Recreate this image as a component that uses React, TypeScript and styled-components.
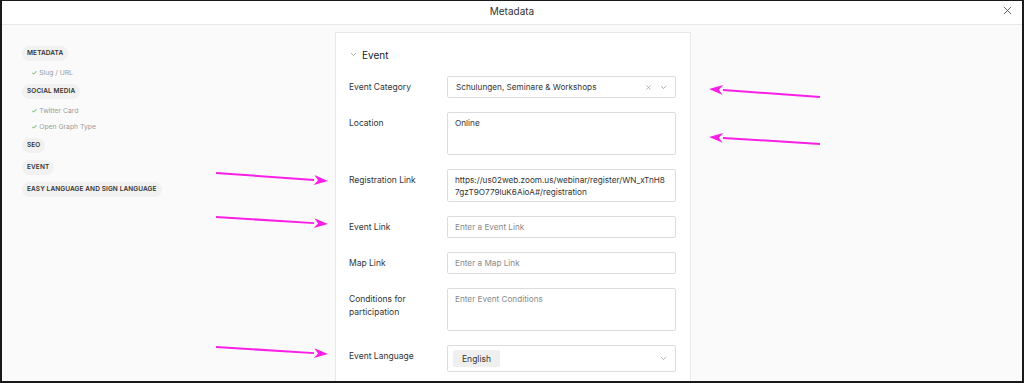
import React from 'react';
import styled, { createGlobalStyle } from 'styled-components';

const GlobalStyle = createGlobalStyle`
  html, body {
    margin: 0;
    padding: 0;
    background: #ffffff;
  }
  body {
    font-family: Inter, "Noto Sans", "Liberation Sans", sans-serif;
    color: #333333;
  }
  * {
    box-sizing: border-box;
  }
`;

type NavItem = { title: string; children?: string[] };

const nav: NavItem[] = [
  { title: 'Metadata', children: ['Slug / URL'] },
  { title: 'Social Media', children: ['Twitter Card', 'Open Graph Type'] },
  { title: 'SEO' },
  { title: 'Event' },
  { title: 'Easy Language and Sign Language' },
];

// annotation arrows: tail -> head
const arrows = [
  { x1: 820, y1: 97, x2: 709, y2: 89 },
  { x1: 820, y1: 144, x2: 709, y2: 137 },
  { x1: 216, y1: 173, x2: 328, y2: 181 },
  { x1: 216, y1: 217, x2: 328, y2: 224 },
  { x1: 216, y1: 347, x2: 328, y2: 354 },
];

const Chevron: React.FC<{ size?: number }> = ({ size = 7 }) => (
  <svg width={size} height={size} viewBox="0 0 10 10" fill="none">
    <path d="M2 3.5 L5 6.5 L8 3.5" stroke="#888" strokeWidth="1" strokeLinecap="round" strokeLinejoin="round" />
  </svg>
);

const App: React.FC = () => (
  <>
    <GlobalStyle />
    <Frame>
      <Header>
        <Title>Metadata</Title>
        <Close aria-label="close">
          <svg width="9" height="9" viewBox="0 0 10 10">
            <path d="M1 1 L9 9 M9 1 L1 9" stroke="#555" strokeWidth="1" />
          </svg>
        </Close>
      </Header>
      <Body>
        <Sidebar>
          {nav.map((item) => (
            <React.Fragment key={item.title}>
              <PillRow>
                <Pill>{item.title}</Pill>
              </PillRow>
              {item.children?.map((child) => (
                <SubItem key={child}>
                  <Check>✓</Check>
                  {child}
                </SubItem>
              ))}
            </React.Fragment>
          ))}
        </Sidebar>
        <Card>
          <SectionHead>
            <Chevron />
            <span>Event</span>
          </SectionHead>
          <Form>
            <Label>Event Category</Label>
            <Select $height={22}>
              <SelectValue>Schulungen, Seminare &amp; Workshops</SelectValue>
              <ClearX>
                <svg width="7" height="7" viewBox="0 0 10 10">
                  <path d="M2 2 L8 8 M8 2 L2 8" stroke="#999" strokeWidth="1" />
                </svg>
              </ClearX>
              <Chevron />
            </Select>

            <Label>Location</Label>
            <Field $height={43}>Online</Field>

            <Label>Registration Link</Label>
            <Field $height={33} $breakAll>
              https://us02web.zoom.us/webinar/register/WN_xTnH87gzT9O779luK6AioA#/registration
            </Field>

            <Label>Event Link</Label>
            <Field $height={22} $placeholder>Enter a Event Link</Field>

            <Label>Map Link</Label>
            <Field $height={22} $placeholder>Enter a Map Link</Field>

            <Label>Conditions for participation</Label>
            <Field $height={43} $placeholder>Enter Event Conditions</Field>

            <Label>Event Language</Label>
            <Select $height={27}>
              <SelectValue>
                <Chip>English</Chip>
              </SelectValue>
              <Chevron />
            </Select>
          </Form>
        </Card>
      </Body>
      <Overlay width="1024" height="383" viewBox="0 0 1024 383">
        {arrows.map((a) => {
          const dx = a.x2 - a.x1;
          const dy = a.y2 - a.y1;
          const len = Math.hypot(dx, dy);
          const ux = dx / len;
          const uy = dy / len;
          const bx = a.x2 - ux * 14;
          const by = a.y2 - uy * 14;
          const px = -uy * 5;
          const py = ux * 5;
          return (
            <g key={`${a.x1}-${a.y1}`}>
              <line x1={a.x1} y1={a.y1} x2={bx} y2={by} stroke="#f91fe6" strokeWidth="2" />
              <polygon
                points={`${a.x2},${a.y2} ${bx + px},${by + py} ${bx + ux * 4},${by + uy * 4} ${bx - px},${by - py}`}
                fill="#f91fe6"
              />
            </g>
          );
        })}
      </Overlay>
    </Frame>
  </>
);

const Frame = styled.div`
  position: relative;
  width: 1024px;
  height: 383px;
  display: flex;
  flex-direction: column;
  border-style: solid;
  border-color: #1a1a1a;
  border-width: 1px 2px 2px 2px;
  overflow: hidden;
  background: #fafafa;
`;

const Header = styled.div`
  position: relative;
  flex: 0 0 24px;
  display: flex;
  align-items: center;
  justify-content: center;
  background: #ffffff;
  border-bottom: 1px solid #e8e8e8;
`;

const Title = styled.div`
  font-size: 10px;
  color: #333;
  margin-top: -4px;
`;

const Close = styled.div`
  position: absolute;
  right: 10px;
  top: 5px;
  display: flex;
`;

const Body = styled.div`
  flex: 1;
  display: flex;
  min-height: 0;
`;

const Sidebar = styled.div`
  width: 333px;
  flex: 0 0 333px;
  padding: 17px 0 0 20px;
  display: flex;
  flex-direction: column;
`;

const PillRow = styled.div`
  height: 22px;
  display: flex;
  align-items: center;
`;

const Pill = styled.span`
  display: inline-flex;
  align-items: center;
  height: 15px;
  padding: 0 5px;
  border-radius: 8px;
  background: #f1f1f1;
  font-size: 6.5px;
  font-weight: 600;
  letter-spacing: 0.1px;
  text-transform: uppercase;
  color: #333;
`;

const SubItem = styled.div`
  height: 16px;
  display: flex;
  align-items: center;
  padding-left: 9px;
  font-size: 6.8px;
  color: #9a9a9a;
`;

const Check = styled.span`
  color: #3fa34d;
  font-size: 7px;
  margin-right: 2px;
`;

const Card = styled.div`
  margin-top: 7px;
  width: 356px;
  flex: 0 0 356px;
  background: #ffffff;
  border: 1px solid #e8e8e8;
  border-bottom: none;
  padding: 0 13px;
`;

const SectionHead = styled.div`
  height: 43px;
  display: flex;
  align-items: center;
  gap: 5px;
  padding-left: 1px;
  font-size: 10px;
  color: #222;
`;

const Form = styled.div`
  display: grid;
  grid-template-columns: 98px 229px;
  row-gap: 14px;
`;

const Label = styled.div`
  font-size: 8.5px;
  line-height: 13px;
  padding-top: 5px;
  padding-right: 14px;
  color: #333;
`;

const Field = styled.div<{ $height: number; $placeholder?: boolean; $breakAll?: boolean }>`
  height: ${(p) => p.$height}px;
  border: 1px solid #dcdcdc;
  border-radius: 2px;
  padding: 4px 7px 0 7px;
  font-size: 8.2px;
  line-height: 12px;
  color: ${(p) => (p.$placeholder ? '#8a8a8a' : '#333')};
  word-break: ${(p) => (p.$breakAll ? 'break-all' : 'normal')};
`;

const Select = styled.div<{ $height: number }>`
  height: ${(p) => p.$height}px;
  border: 1px solid #dcdcdc;
  border-radius: 2px;
  display: flex;
  align-items: center;
  padding: 0 8px 0 4px;
  gap: 8px;
`;

const SelectValue = styled.div`
  flex: 1;
  padding-left: 4px;
  font-size: 8.2px;
  color: #333;
  display: flex;
  align-items: center;
`;

const ClearX = styled.span`
  display: flex;
`;

const Chip = styled.span`
  display: inline-flex;
  align-items: center;
  justify-content: center;
  height: 17px;
  width: 47px;
  margin-left: -3px;
  background: #efefef;
  border-radius: 2px;
  font-size: 8.5px;
  color: #333;
`;

const Overlay = styled.svg`
  position: absolute;
  left: -2px;
  top: -1px;
  pointer-events: none;
`;

export default App;
